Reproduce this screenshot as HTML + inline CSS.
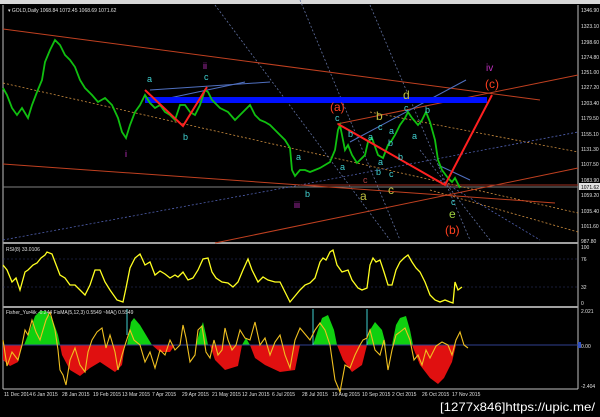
<!DOCTYPE html>
<html><head><meta charset="utf-8"><style>
html,body{margin:0;padding:0;background:#000;width:600px;height:417px;overflow:hidden}
svg{display:block}
text{font-family:"Liberation Sans",sans-serif}
</style></head><body>
<svg width="600" height="417" viewBox="0 0 600 417" xmlns="http://www.w3.org/2000/svg">
<rect width="600" height="417" fill="#000"/>
<rect x="0" y="0" width="600" height="4" fill="#d8d8d8"/>
<line x1="3" y1="5" x2="3" y2="389" stroke="#c0c0c0" stroke-width="1"/>
<line x1="578" y1="5" x2="578" y2="389" stroke="#c0c0c0" stroke-width="1"/>
<line x1="3" y1="389" x2="578" y2="389" stroke="#c0c0c0" stroke-width="1"/>
<rect x="3" y="242" width="575" height="2" fill="#a0a0a0"/>
<rect x="3" y="306" width="575" height="2" fill="#a0a0a0"/>
<line x1="3" y1="187" x2="578" y2="187" stroke="#808080" stroke-width="1"/>
<g fill="none" stroke-width="0.8" stroke-dasharray="2,2">
<line x1="3" y1="83" x2="578" y2="213" stroke="#d09040"/>
<line x1="370" y1="112" x2="578" y2="152" stroke="#d09040"/>
<line x1="430" y1="190" x2="578" y2="232" stroke="#d09040"/>
<line x1="3" y1="240" x2="300" y2="185" stroke="#5060b0"/>
<line x1="300" y1="185" x2="578" y2="132" stroke="#5060b0"/>
<line x1="215" y1="5" x2="390" y2="240" stroke="#6070a0"/>
<line x1="370" y1="5" x2="470" y2="240" stroke="#6070a0"/>
<line x1="300" y1="0" x2="400" y2="240" stroke="#6070a0"/>
<line x1="420" y1="150" x2="490" y2="240" stroke="#6070a0"/>
<line x1="440" y1="180" x2="540" y2="240" stroke="#5060b0"/>
</g>
<g fill="none" stroke-width="1">
<line x1="3" y1="29" x2="540" y2="100" stroke="#c04020"/>
<line x1="3" y1="164" x2="555" y2="203" stroke="#c04020"/>
<line x1="215" y1="243" x2="578" y2="168" stroke="#c04020"/>
<line x1="337" y1="124" x2="578" y2="75" stroke="#c04020"/>
<line x1="300" y1="185" x2="578" y2="185" stroke="#a03020"/>
<line x1="150" y1="90" x2="270" y2="82" stroke="#5070c0"/>
<line x1="160" y1="100" x2="245" y2="82" stroke="#5070c0"/>
<line x1="350" y1="142" x2="466" y2="80" stroke="#5070c0"/>
<line x1="438" y1="165" x2="470" y2="180" stroke="#5070c0"/>
</g>
<rect x="145" y="97" width="342" height="6" fill="#0010ff"/>
<polyline fill="none" stroke="#10c010" stroke-width="1.8" points="3,88 7,95 12,108 17,115 22,108 28,118 32,105 37,92 42,80 45,62 50,50 55,40 60,45 65,55 70,60 75,67 80,80 85,88 92,95 98,102 105,98 112,105 118,118 122,132 126,138 130,125 135,112 140,105 145,95 150,103 155,108 160,105 165,112 170,115 175,120 180,105 185,105 190,112 195,115 200,105 205,90 208,92 212,100 220,108 228,112 235,120 240,115 245,110 250,105 255,115 260,120 265,122 270,125 275,130 280,135 285,140 290,148 292,170 295,176 300,170 305,170 310,172 315,170 320,168 325,165 330,162 335,150 338,130 340,125 342,135 345,150 348,145 352,155 357,163 360,160 365,155 368,142 372,138 378,155 383,158 388,145 392,140 395,135 400,125 405,118 408,112 412,118 418,125 422,120 426,112 430,122 435,140 438,160 442,170 448,178 452,182 455,178 458,184 460,188"/>
<g fill="none" stroke="#ff2020" stroke-width="2">
<polyline points="145,90 183,126 207,87"/>
<polyline points="338,124 445,185 492,95"/>
</g>
<g font-size="9" fill="#40d0d0">
<text x="147" y="82">a</text><text x="183" y="140">b</text><text x="204" y="80">c</text>
<text x="296" y="160">a</text><text x="305" y="197">b</text>
<text x="335" y="121">c</text><text x="348" y="137">b</text><text x="368" y="140">a</text>
<text x="378" y="130">c</text><text x="389" y="134">a</text><text x="388" y="146">b</text>
<text x="340" y="170">a</text><text x="378" y="165">a</text><text x="376" y="175">b</text>
<text x="398" y="160">b</text><text x="389" y="177">c</text><text x="404" y="111">c</text>
<text x="412" y="139">a</text><text x="425" y="113">b</text><text x="451" y="205">c</text>
</g>
<text x="203" y="69" font-size="9" fill="#c030c0">ii</text>
<text x="125" y="157" font-size="9" fill="#c030c0">i</text>
<text x="294" y="208" font-size="9" fill="#c030c0">iii</text>
<text x="486" y="71" font-size="10" fill="#c030c0">iv</text>
<text x="363" y="183" font-size="9" fill="#b04040">c</text>
<g font-size="12" fill="#c0c040">
<text x="376" y="120">b</text><text x="403" y="99">d</text><text x="360" y="200">a</text><text x="388" y="194">c</text>
</g>
<text x="449" y="218" font-size="12" fill="#a0d040">e</text>
<g font-size="12" fill="#ff4020">
<text x="330" y="111">(a)</text><text x="485" y="88">(c)</text><text x="445" y="234">(b)</text>
</g>
<text x="8" y="12" font-size="5" fill="#e0e0e0">▾ GOLD,Daily  1068.84 1072.45 1068.69 1071.62</text>
<g font-size="5" fill="#e0e0e0">
<text x="581" y="12">1346.90</text><text x="581" y="28">1323.10</text><text x="581" y="44">1298.60</text>
<text x="581" y="59">1274.80</text><text x="581" y="74">1251.00</text><text x="581" y="89">1227.20</text>
<text x="581" y="105">1203.40</text><text x="581" y="120">1179.50</text><text x="581" y="136">1155.10</text>
<text x="581" y="151">1131.30</text><text x="581" y="166">1107.50</text><text x="581" y="182">1083.90</text>
<text x="581" y="197">1059.20</text><text x="581" y="213">1035.40</text><text x="581" y="228">1011.60</text>
<text x="581" y="243">987.80</text>
</g>
<rect x="579" y="183" width="21" height="7" fill="#e0e0e0"/>
<text x="581" y="189" font-size="5" fill="#000">1071.62</text>
<text x="6" y="251" font-size="5" fill="#e0e0e0">RSI(8) 33.0106</text>
<g stroke="#303a70" stroke-width="0.6" stroke-dasharray="2,2"><line x1="3" y1="259" x2="578" y2="259"/><line x1="3" y1="287" x2="578" y2="287"/></g>
<polyline fill="none" stroke="#ffff20" stroke-width="1.3" points="3,265 7,270 12,282 16,278 20,290 25,272 28,270 33,265 37,263 41,258 45,255 47,252 52,254 55,262 60,275 65,278 70,285 75,285 80,290 85,295 90,285 95,270 100,270 105,282 110,290 117,300 123,302 126,288 130,268 135,258 140,254 145,265 150,262 155,275 160,271 165,274 170,278 175,275 178,277 183,272 188,280 193,278 198,270 203,259 208,258 212,272 216,278 222,282 228,283 233,287 238,282 243,270 248,259 252,270 258,282 263,277 268,280 275,282 280,282 285,292 290,302 295,296 300,290 305,285 310,283 315,278 320,262 323,258 326,260 330,252 333,250 337,265 342,272 348,270 352,280 358,288 362,290 367,288 370,265 373,258 376,262 380,260 384,272 388,285 392,285 396,270 400,262 404,258 408,255 412,262 416,268 420,272 425,282 430,295 435,300 440,302 445,300 450,302 453,303 455,282 458,290 462,287"/>
<g font-size="5" fill="#e0e0e0"><text x="581" y="249">100</text><text x="581" y="261">76</text><text x="581" y="289">32</text><text x="581" y="305">0</text></g>
<g fill="#10d010">
<polygon points="24,345 30,330 35,316 40,311 46,311 52,318 58,335 60,345"/>
<polygon points="127,345 131,322 134,318 140,325 146,335 152,345"/>
<polygon points="196,345 200,330 203,322 206,335 208,345"/>
<polygon points="242,345 246,338 250,345"/>
<polygon points="313,345 318,330 322,318 328,315 334,330 337,345"/>
<polygon points="367,345 370,330 375,322 382,330 386,345"/>
<polygon points="392,345 396,325 400,318 406,316 410,330 413,345"/>
</g>
<g fill="#e01010">
<polygon points="3,345 22,345 18,362 10,366 3,360"/>
<polygon points="60,345 125,345 122,365 115,372 100,362 90,368 80,376 70,370 62,355"/>
<polygon points="152,345 175,345 170,352 160,352"/>
<polygon points="210,345 242,345 238,366 225,370 215,360"/>
<polygon points="250,345 300,345 295,370 280,372 265,365 255,358"/>
<polygon points="337,345 367,345 362,365 352,372 343,360"/>
<polygon points="412,345 456,345 452,362 444,378 438,384 430,378 420,365"/>
</g>
<line x1="3" y1="345" x2="578" y2="345" stroke="#304090" stroke-width="1"/>
<line x1="127" y1="309" x2="127" y2="335" stroke="#40d0d0" stroke-width="1"/>
<line x1="313" y1="309" x2="313" y2="345" stroke="#40d0d0" stroke-width="1"/>
<line x1="367" y1="309" x2="367" y2="345" stroke="#40d0d0" stroke-width="1"/>
<polyline fill="none" stroke="#f0c020" stroke-width="1.1" points="3,340 7,366 12,352 18,360 22,345 25,330 28,335 32,320 36,332 40,340 46,320 50,312 55,330 58,350 60,370 63,375 66,385 70,360 75,348 80,365 85,372 88,352 92,340 97,332 102,328 106,348 110,335 115,352 118,370 122,355 126,342 130,330 134,340 140,345 145,362 150,352 155,368 160,350 165,355 170,340 175,350 180,345 183,325 186,338 190,362 195,355 198,330 202,326 206,352 210,358 214,340 218,355 222,350 225,328 228,340 232,350 236,345 240,330 245,338 250,340 255,322 260,345 265,338 270,355 275,342 280,335 285,355 290,368 295,340 300,328 305,334 310,340 315,330 320,323 325,330 330,345 335,380 340,392 345,365 350,368 355,355 360,345 363,340 367,338 370,330 375,350 380,355 384,340 388,370 392,350 396,335 400,332 405,328 410,340 414,360 418,355 422,365 426,350 430,358 436,346 442,342 448,345 452,355 456,340 460,332 464,345 468,348"/>
<text x="6" y="314" font-size="5" fill="#e0e0e0">Fisher_Yur4ik -0.244  FisMA(5,12,3) 0.5549  ~MA() 0.5549</text>
<g font-size="5" fill="#e0e0e0"><text x="581" y="313">2.021</text><text x="581" y="348">0.00</text><text x="581" y="388">-2.404</text></g>
<rect x="578" y="342" width="3" height="6" fill="#3050c0"/>
<g font-size="5" fill="#e0e0e0">
<text x="4" y="396">11 Dec 2014</text><text x="33" y="396">6 Jan 2015</text><text x="62" y="396">28 Jan 2015</text>
<text x="93" y="396">19 Feb 2015</text><text x="122" y="396">13 Mar 2015</text><text x="152" y="396">7 Apr 2015</text>
<text x="182" y="396">29 Apr 2015</text><text x="212" y="396">21 May 2015</text><text x="242" y="396">12 Jun 2015</text>
<text x="272" y="396">6 Jul 2015</text><text x="302" y="396">28 Jul 2015</text><text x="332" y="396">19 Aug 2015</text>
<text x="362" y="396">10 Sep 2015</text><text x="392" y="396">2 Oct 2015</text><text x="422" y="396">26 Oct 2015</text>
<text x="452" y="396">17 Nov 2015</text>
</g>
<text x="440" y="411" font-size="12" fill="#ffffff" font-family="Liberation Mono, monospace" textLength="155" lengthAdjust="spacingAndGlyphs">[1277x846]https://upic.me/</text>
</svg>
</body></html>
